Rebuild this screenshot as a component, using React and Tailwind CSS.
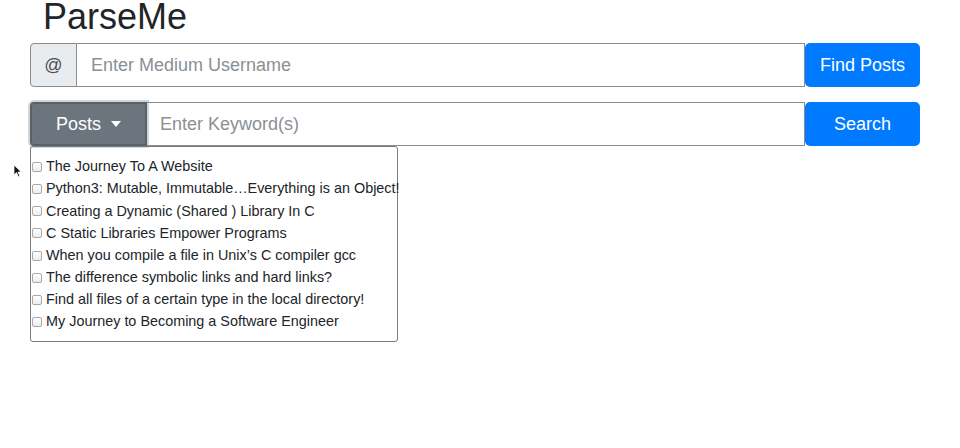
import React from 'react';

const posts = [
  'The Journey To A Website',
  'Python3: Mutable, Immutable…Everything is an Object!',
  'Creating a Dynamic (Shared ) Library In C',
  'C Static Libraries Empower Programs',
  'When you compile a file in Unix’s C compiler gcc',
  'The difference symbolic links and hard links?',
  'Find all files of a certain type in the local directory!',
  'My Journey to Becoming a Software Engineer',
];

const Cursor = () => (
  <svg className="absolute left-[13px] top-[164px]" width="9" height="14" viewBox="0 0 9 14">
    <path d="M1 1 L1 11 L3.5 8.6 L5.3 12.8 L6.8 12.1 L5 8 L8.3 8 Z" fill="#111" stroke="#fff" strokeWidth="0.8" />
  </svg>
);

export default function App() {
  return (
    <div className="relative w-[960px] h-[448px] bg-white overflow-hidden text-[#212529]" style={{ fontFamily: '"Liberation Sans", Arial, sans-serif' }}>
      <Cursor />
      <div className="pl-[30px] pr-[40px]">
        <h1 className="text-[36px] leading-[36px] pl-[13px] -mt-[1px] h-[44px] text-[#212529]">ParseMe</h1>

        {/* username row */}
        <div className="flex h-[44px]">
          <div className="w-[47px] flex items-center justify-center bg-[#e9ecef] border border-[#8a8d90] rounded-l-[4px] text-[18px] text-[#495057]">@</div>
          <div className="flex-1 flex items-center border border-l-0 border-[#8a8d90] px-[14px] text-[18px] text-[#8a9096]">Enter Medium Username</div>
          <button className="w-[115px] bg-[#007bff] text-white text-[18px] rounded-[5px]">Find Posts</button>
        </div>

        {/* keyword row */}
        <div className="flex h-[44px] mt-[15px]">
          <button className="w-[117px] flex items-center justify-center gap-[10px] bg-[#6c757d] text-white text-[18px] rounded-l-[4px] border-2 border-[#5a6268] shadow-[0_0_0_2px_rgba(130,138,145,0.35)]">
            Posts
            <span className="w-0 h-0 border-l-[5px] border-r-[5px] border-t-[6px] border-l-transparent border-r-transparent border-t-white" />
          </button>
          <div className="flex-1 flex items-center border border-l-0 border-[#8a8d90] px-[13px] text-[18px] text-[#8a9096]">Enter Keyword(s)</div>
          <button className="w-[115px] bg-[#007bff] text-white text-[18px] rounded-[5px]">Search</button>
        </div>

        {/* dropdown list */}
        <div className="w-[368px] border border-[#777b80] rounded-[3px] pt-[9px] pb-[8px]">
          {posts.map((p) => (
            <label key={p} className="flex items-center h-[22.15px] text-[14.4px] text-[#212529] whitespace-nowrap">
              <span className="shrink-0 ml-[1px] w-[10px] h-[10px] rounded-[2px] border border-[#a9a9a9] bg-gradient-to-b from-white to-[#ececec]" />
              <span className="ml-[4px]">{p}</span>
            </label>
          ))}
        </div>
      </div>
    </div>
  );
}
